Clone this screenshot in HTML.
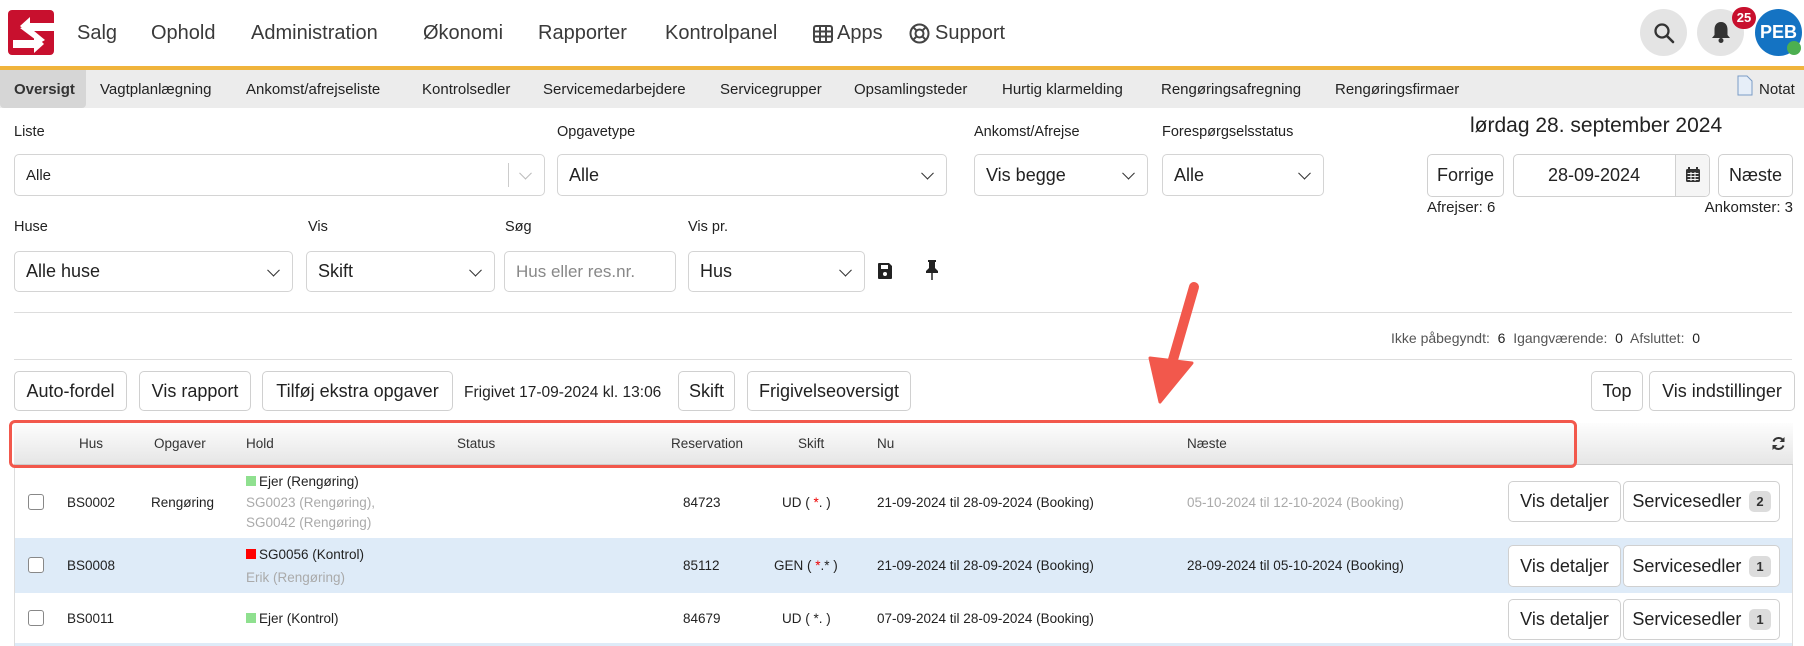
<!DOCTYPE html>
<html><head><meta charset="utf-8"><style>
*{box-sizing:border-box;margin:0;padding:0}
body{width:1804px;height:646px;overflow:hidden;background:#fff;font-family:"Liberation Sans",Arial,sans-serif;color:#222;position:relative}
.a{position:absolute;white-space:nowrap}
.nav{font-size:20px;color:#3a3a3a;top:22px}
.sub{font-size:15px;color:#222;top:81px}
.lbl{font-size:14.5px;color:#222}
.box{position:absolute;border:1px solid #d4d4d4;border-radius:5px;background:#fff;font-size:18px;color:#222;padding-left:11px;display:flex;align-items:center}
.chev{position:absolute;right:14px;top:50%;width:9px;height:9px;border-right:1.6px solid #333;border-bottom:1.6px solid #333;transform:translateY(-70%) rotate(45deg)}
.btn{position:absolute;border:1px solid #d0d0d0;border-radius:5px;background:#fff;font-size:18px;color:#222;display:flex;align-items:center;justify-content:center}
.th{font-size:13.5px;color:#333;top:436px}
.td{font-size:13.5px;color:#222}
.g{color:#aaa}
.sq{display:inline-block;width:10px;height:10px;margin-right:3px;vertical-align:0}
.cb{position:absolute;left:28px;width:16px;height:16px;border:1.5px solid #888;border-radius:3px;background:#fff}
.bdg{display:inline-block;background:#dcdcdc;border-radius:5px;font-size:13px;font-weight:bold;padding:3px 7px;margin-left:8px;color:#333}
.r{color:#e00}
</style></head><body>
<svg class="a" style="left:8px;top:10px" width="46" height="45" viewBox="0 0 46 45"><rect width="46" height="45" rx="4" fill="#c8102e"/><polygon fill="#fff" points="46,13 22,13 22,7 12,16 22,25 22,21 46,21"/><polygon fill="#fff" points="12,18 20,16 37,30 32,33"/><polygon fill="#fff" points="5,30 26,30 26,24 36,34 26,43 26,38 5,38"/></svg>
<div class="a nav" style="left:77px">Salg</div>
<div class="a nav" style="left:151px">Ophold</div>
<div class="a nav" style="left:251px">Administration</div>
<div class="a nav" style="left:423px">Økonomi</div>
<div class="a nav" style="left:538px">Rapporter</div>
<div class="a nav" style="left:665px">Kontrolpanel</div>
<svg class="a" style="left:813px;top:25px" width="20" height="18" viewBox="0 0 20 18"><rect x="1" y="1" width="18" height="16" rx="2" fill="none" stroke="#444" stroke-width="2"/><path d="M1 6.5H19M1 11.5H19M7 1V17M13 1V17" stroke="#444" stroke-width="2"/></svg>
<div class="a nav" style="left:837px">Apps</div>
<svg class="a" style="left:909px;top:23px" width="21" height="21" viewBox="0 0 21 21"><circle cx="10.5" cy="10.5" r="9" fill="none" stroke="#444" stroke-width="2"/><circle cx="10.5" cy="10.5" r="4" fill="none" stroke="#444" stroke-width="2"/><path d="M4 4L7.6 7.6M17 4L13.4 7.6M4 17L7.6 13.4M17 17L13.4 13.4" stroke="#444" stroke-width="2"/></svg>
<div class="a nav" style="left:935px">Support</div>
<div class="a" style="left:1640px;top:9px;width:47px;height:47px;border-radius:50%;background:#e4e4e4"></div>
<svg class="a" style="left:1653px;top:22px" width="22" height="22" viewBox="0 0 22 22"><circle cx="9" cy="9" r="6.5" fill="none" stroke="#333" stroke-width="2.3"/><path d="M14 14L20 20" stroke="#333" stroke-width="2.6" stroke-linecap="round"/></svg>
<div class="a" style="left:1697px;top:9px;width:47px;height:47px;border-radius:50%;background:#e4e4e4"></div>
<svg class="a" style="left:1710px;top:20px" width="22" height="24" viewBox="0 0 22 24"><path d="M11 2C6.5 2 4.5 5.5 4.5 9.5V15L2 18H20L17.5 15V9.5C17.5 5.5 15.5 2 11 2Z" fill="#333"/><circle cx="11" cy="20.5" r="2.5" fill="#333"/></svg>
<div class="a" style="left:1732px;top:7px;width:24px;height:22px;border-radius:11px;background:#c8102e;color:#fff;font-size:13px;font-weight:bold;text-align:center;line-height:22px">25</div>
<div class="a" style="left:1755px;top:9px;width:47px;height:47px;border-radius:50%;background:#1473c3;color:#fff;font-size:18px;font-weight:bold;text-align:center;line-height:47px">PEB</div>
<div class="a" style="left:1787px;top:41px;width:14px;height:14px;border-radius:50%;background:#4caf50"></div>
<div class="a" style="left:0;top:66px;width:1804px;height:4px;background:#f0b43c"></div>
<div class="a" style="left:0;top:70px;width:1804px;height:38px;background:#ececec"></div>
<div class="a" style="left:0;top:70px;width:86px;height:38px;background:#d6d6d6;border-radius:0 0 4px 4px"></div>
<div class="a sub" style="left:14px;font-weight:bold;color:#333">Oversigt</div>
<div class="a sub" style="left:100px">Vagtplanlægning</div>
<div class="a sub" style="left:246px">Ankomst/afrejseliste</div>
<div class="a sub" style="left:422px">Kontrolsedler</div>
<div class="a sub" style="left:543px">Servicemedarbejdere</div>
<div class="a sub" style="left:720px">Servicegrupper</div>
<div class="a sub" style="left:854px">Opsamlingsteder</div>
<div class="a sub" style="left:1002px">Hurtig klarmelding</div>
<div class="a sub" style="left:1161px">Rengøringsafregning</div>
<div class="a sub" style="left:1335px">Rengøringsfirmaer</div>
<svg class="a" style="left:1737px;top:75px" width="16" height="21" viewBox="0 0 16 21"><path d="M1 1H10L15 6V20H1Z" fill="#e6eef8" stroke="#7a9cc6"/></svg>
<div class="a sub" style="left:1759px">Notat</div>
<div class="a lbl" style="left:14px;top:124px">Liste</div>
<div class="box" style="left:14px;top:154px;width:531px;height:42px;font-size:15px">Alle<div class="a" style="left:493px;top:8px;width:1px;height:24px;background:#ccc"></div><div class="chev" style="right:14px;border-color:#bbb"></div></div>
<div class="a lbl" style="left:557px;top:124px">Opgavetype</div>
<div class="box" style="left:557px;top:154px;width:390px;height:42px">Alle<div class="chev"></div></div>
<div class="a lbl" style="left:974px;top:124px">Ankomst/Afrejse</div>
<div class="box" style="left:974px;top:154px;width:174px;height:42px">Vis begge<div class="chev"></div></div>
<div class="a lbl" style="left:1162px;top:124px">Forespørgselsstatus</div>
<div class="box" style="left:1162px;top:154px;width:162px;height:42px">Alle<div class="chev"></div></div>
<div class="a" style="left:1470px;top:114px;font-size:21px;color:#222">lørdag 28. september 2024</div>
<div class="btn" style="left:1427px;top:154px;width:77px;height:43px">Forrige</div>
<div class="btn" style="left:1513px;top:154px;width:197px;height:43px;justify-content:flex-start;padding-left:34px">28-09-2024</div>
<div class="a" style="left:1675px;top:155px;width:34px;height:41px;background:#f5f5f5;border-left:1px solid #d0d0d0;border-radius:0 5px 5px 0"></div>
<svg class="a" style="left:1686px;top:167px" width="14" height="15" viewBox="0 0 14 15"><rect x="0" y="2" width="14" height="13" rx="1.5" fill="#333"/><path d="M3 0V3M11 0V3" stroke="#333" stroke-width="2"/><path d="M1.5 6.5H12.5M1.5 9.5H12.5M1.5 12.5H12.5M5 5V14M9 5V14" stroke="#f5f5f5" stroke-width="1"/></svg>
<div class="btn" style="left:1718px;top:154px;width:75px;height:43px">Næste</div>
<div class="a" style="left:1427px;top:199px;font-size:15px">Afrejser: 6</div>
<div class="a" style="right:11px;top:199px;font-size:15px">Ankomster: 3</div>
<div class="a lbl" style="left:14px;top:219px">Huse</div>
<div class="box" style="left:14px;top:251px;width:279px;height:41px">Alle huse<div class="chev"></div></div>
<div class="a lbl" style="left:308px;top:219px">Vis</div>
<div class="box" style="left:306px;top:251px;width:189px;height:41px">Skift<div class="chev"></div></div>
<div class="a lbl" style="left:505px;top:219px">Søg</div>
<div class="box" style="left:504px;top:251px;width:172px;height:41px;color:#888;font-size:17px">Hus eller res.nr.</div>
<div class="a lbl" style="left:688px;top:219px">Vis pr.</div>
<div class="box" style="left:688px;top:251px;width:177px;height:41px">Hus<div class="chev"></div></div>
<svg class="a" style="left:877px;top:262px" width="16" height="18" viewBox="0 0 16 18"><path d="M1 2Q1 1 2 1H12L15 4V16Q15 17 14 17H2Q1 17 1 16Z" fill="#222"/><rect x="4" y="3" width="7" height="4" fill="#fff"/><circle cx="8" cy="12" r="2" fill="#fff"/></svg>
<svg class="a" style="left:925px;top:259px" width="14" height="22" viewBox="0 0 14 22"><path d="M3 1H11V3H10V9L13 12V14H1V12L4 9V3H3Z" fill="#222"/><path d="M7 14V21" stroke="#222" stroke-width="1.5"/></svg>
<div class="a" style="left:14px;top:312px;width:1778px;height:1px;background:#ddd"></div>
<div class="a" style="left:1391px;top:330px;font-size:14px;color:#555">Ikke påbegyndt: <span style="color:#222">&nbsp;6</span>&nbsp; Igangværende: <span style="color:#222">&nbsp;0</span>&nbsp; Afsluttet: <span style="color:#222">&nbsp;0</span></div>
<div class="a" style="left:14px;top:359px;width:1778px;height:1px;background:#ddd"></div>
<div class="btn" style="left:14px;top:371px;width:113px;height:40px">Auto-fordel</div>
<div class="btn" style="left:139px;top:371px;width:112px;height:40px">Vis rapport</div>
<div class="btn" style="left:262px;top:371px;width:191px;height:40px">Tilføj ekstra opgaver</div>
<div class="a" style="left:464px;top:384px;font-size:15.5px">Frigivet 17-09-2024 kl. 13:06</div>
<div class="btn" style="left:678px;top:371px;width:57px;height:40px">Skift</div>
<div class="btn" style="left:747px;top:371px;width:164px;height:40px">Frigivelseoversigt</div>
<div class="btn" style="left:1591px;top:371px;width:52px;height:40px">Top</div>
<div class="btn" style="left:1649px;top:371px;width:146px;height:40px">Vis indstillinger</div>
<div class="a" style="left:14px;top:423px;width:1779px;height:223px;border-left:1px solid #ddd;border-right:1px solid #ddd"></div>
<div class="a" style="left:14px;top:423px;width:1779px;height:42px;background:linear-gradient(#fdfdfd,#e6e6e6);border-bottom:1px solid #ccc"></div>
<div class="a" style="left:9px;top:420px;width:1568px;height:48px;border:3px solid #f2584c;border-radius:6px"></div>
<div class="a th" style="left:79px">Hus</div>
<div class="a th" style="left:154px">Opgaver</div>
<div class="a th" style="left:246px">Hold</div>
<div class="a th" style="left:457px">Status</div>
<div class="a th" style="left:671px">Reservation</div>
<div class="a th" style="left:798px">Skift</div>
<div class="a th" style="left:877px">Nu</div>
<div class="a th" style="left:1187px">Næste</div>
<svg class="a" style="left:1771px;top:436px" width="15" height="15" viewBox="0 0 15 15"><path d="M12.5 5A5.5 5.5 0 0 0 2.5 5.5M2.5 10A5.5 5.5 0 0 0 12.5 9.5" fill="none" stroke="#333" stroke-width="2"/><path d="M13.5 1V6H8.5Z M1.5 14V9H6.5Z" fill="#333"/></svg>
<div class="cb" style="top:494px"></div>
<div class="a td" style="left:67px;top:495px">BS0002</div>
<div class="a td" style="left:151px;top:495px">Rengøring</div>
<div class="a td" style="left:246px;top:474px"><span class="sq" style="background:#8fe08f"></span>Ejer (Rengøring)</div>
<div class="a td g" style="left:246px;top:495px">SG0023 (Rengøring),</div>
<div class="a td g" style="left:246px;top:515px">SG0042 (Rengøring)</div>
<div class="a td" style="left:683px;top:495px">84723</div>
<div class="a td" style="left:782px;top:495px">UD ( <span class="r">*</span>. )</div>
<div class="a td" style="left:877px;top:495px">21-09-2024 til 28-09-2024 (Booking)</div>
<div class="a td g" style="left:1187px;top:495px">05-10-2024 til 12-10-2024 (Booking)</div>
<div class="btn" style="left:1508px;top:481px;width:113px;height:41px">Vis detaljer</div>
<div class="btn" style="left:1623px;top:481px;width:157px;height:41px">Servicesedler<span class="bdg">2</span></div>
<div class="a" style="left:15px;top:538px;width:1777px;height:55px;background:#deebf8"></div>
<div class="cb" style="top:557px"></div>
<div class="a td" style="left:67px;top:558px">BS0008</div>
<div class="a td" style="left:246px;top:547px"><span class="sq" style="background:#f00"></span>SG0056 (Kontrol)</div>
<div class="a td g" style="left:246px;top:570px">Erik (Rengøring)</div>
<div class="a td" style="left:683px;top:558px">85112</div>
<div class="a td" style="left:774px;top:558px">GEN ( <span class="r">*</span>.* )</div>
<div class="a td" style="left:877px;top:558px">21-09-2024 til 28-09-2024 (Booking)</div>
<div class="a td" style="left:1187px;top:558px">28-09-2024 til 05-10-2024 (Booking)</div>
<div class="btn" style="left:1508px;top:545px;width:113px;height:42px">Vis detaljer</div>
<div class="btn" style="left:1623px;top:545px;width:157px;height:42px">Servicesedler<span class="bdg">1</span></div>
<div class="cb" style="top:610px"></div>
<div class="a td" style="left:67px;top:611px">BS0011</div>
<div class="a td" style="left:246px;top:611px"><span class="sq" style="background:#8fe08f"></span>Ejer (Kontrol)</div>
<div class="a td" style="left:683px;top:611px">84679</div>
<div class="a td" style="left:782px;top:611px">UD ( *. )</div>
<div class="a td" style="left:877px;top:611px">07-09-2024 til 28-09-2024 (Booking)</div>
<div class="btn" style="left:1508px;top:599px;width:113px;height:41px">Vis detaljer</div>
<div class="btn" style="left:1623px;top:599px;width:157px;height:41px">Servicesedler<span class="bdg">1</span></div>
<div class="a" style="left:15px;top:643px;width:1777px;height:3px;background:#deebf8"></div>
<svg class="a" style="left:1140px;top:275px" width="70" height="135" viewBox="0 0 70 135"><path d="M54 12L30 95" stroke="#f2584c" stroke-width="10" stroke-linecap="round"/><polygon points="10,83 52,88 20,127" fill="#f2584c" stroke="#f2584c" stroke-width="3" stroke-linejoin="round"/></svg>
</body></html>
